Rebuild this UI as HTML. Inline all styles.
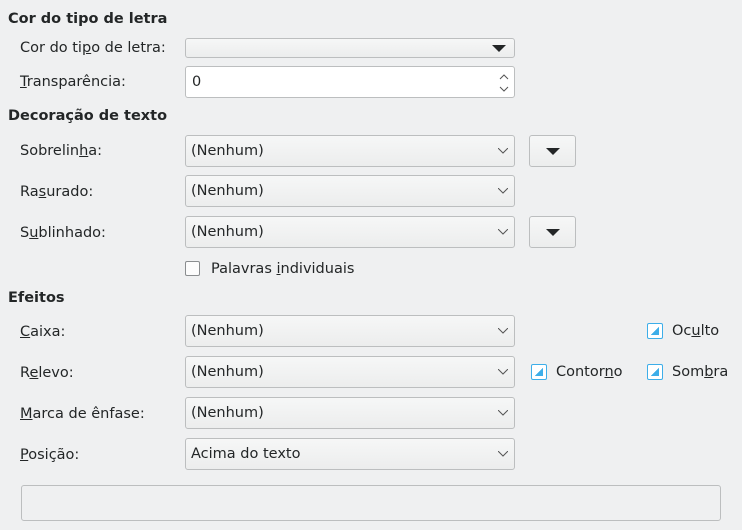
<!DOCTYPE html><html><head><style>
body{margin:0;width:742px;height:530px;background:#eff0f1;font-family:"DejaVu Sans",sans-serif;font-size:14.5px;color:#232627;position:relative;overflow:hidden}
.a{position:absolute;white-space:nowrap}
.h{font-weight:bold}
.cb{position:absolute;left:185px;width:330px;height:30px;border:1px solid #bcbebf;border-radius:3px;background:linear-gradient(#f6f7f7,#eceded);box-sizing:border-box}
.cb span{position:absolute;left:5px;top:7px}
.cb svg{position:absolute;right:6px;top:12px}
.btn{position:absolute;left:529px;width:47px;height:30px;border:1px solid #bcbebf;border-radius:3px;background:linear-gradient(#f6f7f7,#eceded);box-sizing:border-box}
.tri{position:absolute;width:0;height:0;border-left:7px solid transparent;border-right:7px solid transparent;border-top:7px solid #232627}
.ck{position:absolute;width:16px;height:16px;border:1px solid #3daee9;border-radius:2px;background:#fff;box-sizing:border-box}
.ck:after{content:"";position:absolute;left:3px;top:3px;width:8px;height:8px;background:linear-gradient(135deg,transparent 50%,#3daee9 50%);border:0}
u{text-decoration:underline}
</style></head><body>
<div class="a h" style="left:8px;top:11px">Cor do tipo de letra</div>
<div class="a" style="left:20px;top:40px">Cor do ti<u>p</u>o de letra:</div>
<div class="cb" style="top:38px;height:20px"><div class="tri" style="right:8px;top:6px"></div></div>
<div class="a" style="left:20px;top:74px"><u>T</u>ransparência:</div>
<div class="a" style="left:185px;top:66px;width:330px;height:32px;background:#fff;border:1px solid #bcbebf;border-radius:3px;box-sizing:border-box"><span class="a" style="left:6px;top:7px">0</span>
<svg class="a" style="right:5px;top:6px" width="10" height="20"><path d="M1 6l4-4 4 4M1 14l4 4 4-4" fill="none" stroke="#555" stroke-width="1"/></svg></div>
<div class="a h" style="left:8px;top:108px">Decoração de texto</div>
<div class="a" style="left:20px;top:143px">Sobrelin<u>h</u>a:</div>
<div class="cb" style="top:135px;height:32px"><span>(Nenhum)</span><svg width="10" height="6"><path d="M0 0l5 5 5-5" fill="none" stroke="#555"/></svg></div>
<div class="btn" style="top:135px;height:32px"><div class="tri" style="left:16px;top:12px"></div></div>
<div class="a" style="left:20px;top:184px">Ra<u>s</u>urado:</div>
<div class="cb" style="top:175px;height:32px"><span>(Nenhum)</span><svg width="10" height="6"><path d="M0 0l5 5 5-5" fill="none" stroke="#555"/></svg></div>
<div class="a" style="left:20px;top:225px">S<u>u</u>blinhado:</div>
<div class="cb" style="top:216px;height:32px"><span>(Nenhum)</span><svg width="10" height="6"><path d="M0 0l5 5 5-5" fill="none" stroke="#555"/></svg></div>
<div class="btn" style="top:216px;height:32px"><div class="tri" style="left:16px;top:12px"></div></div>
<div class="a" style="left:185px;top:261px;width:15px;height:15px;border:1px solid #8a8d8f;border-radius:2px;background:#fcfcfc;box-sizing:border-box"></div>
<div class="a" style="left:211px;top:261px">Palavras <u>i</u>ndividuais</div>
<div class="a h" style="left:8px;top:290px">Efeitos</div>
<div class="a" style="left:20px;top:324px"><u>C</u>aixa:</div>
<div class="cb" style="top:315px;height:32px"><span>(Nenhum)</span><svg width="10" height="6"><path d="M0 0l5 5 5-5" fill="none" stroke="#555"/></svg></div>
<div class="a" style="left:20px;top:365px">R<u>e</u>levo:</div>
<div class="cb" style="top:356px;height:32px"><span>(Nenhum)</span><svg width="10" height="6"><path d="M0 0l5 5 5-5" fill="none" stroke="#555"/></svg></div>
<div class="a" style="left:20px;top:406px"><u>M</u>arca de ênfase:</div>
<div class="cb" style="top:397px;height:32px"><span>(Nenhum)</span><svg width="10" height="6"><path d="M0 0l5 5 5-5" fill="none" stroke="#555"/></svg></div>
<div class="a" style="left:20px;top:447px"><u>P</u>osição:</div>
<div class="cb" style="top:438px;height:32px"><span>Acima do texto</span><svg width="10" height="6"><path d="M0 0l5 5 5-5" fill="none" stroke="#555"/></svg></div>
<div class="ck" style="left:647px;top:323px"></div><div class="a" style="left:672px;top:323px">Oc<u>u</u>lto</div>
<div class="ck" style="left:531px;top:364px"></div><div class="a" style="left:556px;top:364px">Contor<u>n</u>o</div>
<div class="ck" style="left:647px;top:364px"></div><div class="a" style="left:672px;top:364px">Som<u>b</u>ra</div>
<div class="a" style="left:21px;top:485px;width:700px;height:36px;border:1px solid #bcbebf;border-radius:3px;box-sizing:border-box;background:#eff0f1"></div>
</body></html>
